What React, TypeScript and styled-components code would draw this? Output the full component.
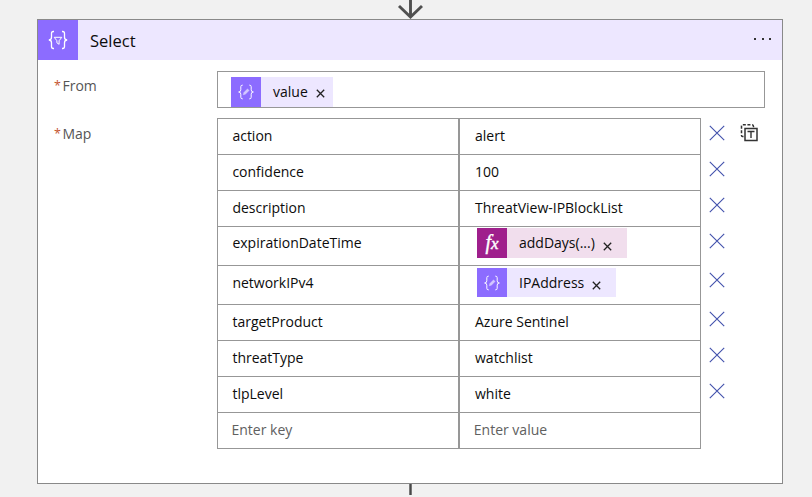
import React from "react";
import styled, { createGlobalStyle } from "styled-components";

const Global = createGlobalStyle`
  * { box-sizing: border-box; }
  html, body { margin: 0; background: #f1f1f1; }
  body { overflow: hidden; font-family: "Open Sans", "Noto Sans", sans-serif; font-size: 14px; color: #0c0c0c; }
`;

const Canvas = styled.main`
  display: flex;
  flex-direction: column;
  width: 812px;
  height: 497px;
  background: #f1f1f1;
`;

const ArrowIn = styled.svg`
  display: block;
  flex: none;
  width: 28px;
  height: 19px;
  margin-left: 396px;
`;

const LineOut = styled.div`
  width: 3px;
  height: 11px;
  margin-left: 409px;
  background: linear-gradient(90deg, #777 0 1px, #484848 1px 2px, #777 2px);
`;

const Card = styled.section`
  flex: none;
  width: 746px;
  height: 465px;
  margin-left: 37px;
  background: #fff;
  border: 1px solid #898989;
`;

const Header = styled.header`
  display: flex;
  align-items: center;
  height: 40px;
  background: #ede7ff;
`;

const HeaderIcon = styled.div`
  display: grid;
  place-items: center;
  width: 40px;
  height: 40px;
  background: #8c6cff;
`;

const Text = styled.span`
  white-space: nowrap;
  line-height: 20px;
`;

const Title = styled(Text)`
  flex: 1;
  padding: 2px 0 0 12px;
  font-size: 16.5px;
`;

const MoreButton = styled.svg`
  width: 20px;
  height: 4px;
  margin: 0 9px 2px 0;
`;

const Field = styled.div<{ $gap: number }>`
  display: flex;
  align-items: flex-start;
  margin-top: ${(p) => p.$gap}px;
`;

const Label = styled.label<{ $top: number }>`
  display: flex;
  width: 179px;
  padding: ${(p) => p.$top}px 0 0 16px;
  color: #555;
`;

const Required = styled.span`
  width: 8.5px;
  font-size: 12.5px;
  line-height: 20px;
  color: #c4532f;
`;

const Input = styled.div`
  display: flex;
  align-items: flex-end;
  width: 548px;
  height: 37px;
  padding-left: 13px;
  border: 1px solid #979797;
`;

const Grid = styled.div`
  width: 484px;
  border-top: 1px solid #979797;
`;

const Row = styled.div<{ $h: number }>`
  display: grid;
  grid-template-columns: 242px 242px;
  height: ${(p) => p.$h}px;
`;

const Cell = styled.div<{ $top: number; $left?: number; $hint?: boolean }>`
  display: flex;
  align-items: flex-start;
  padding: ${(p) => p.$top}px 0 0 ${(p) => p.$left ?? 15}px;
  color: ${(p) => (p.$hint ? "#606060" : "inherit")};
  border: solid #979797;
  border-width: 0 1px 1px 1px;
`;

const Token = styled.div<{ $w: number; $h: number; $bg: string }>`
  display: flex;
  width: ${(p) => p.$w}px;
  height: ${(p) => p.$h}px;
  background: ${(p) => p.$bg};
`;

const ValueToken = styled(Token)`
  margin-left: 2px;
`;

const TokenIcon = styled.div<{ $bg: string }>`
  display: grid;
  place-items: center;
  width: 30px;
  height: 100%;
  margin-right: 12px;
  background: ${(p) => p.$bg};
`;

const TokenLabel = styled(Text)<{ $top: number; $w: number }>`
  width: ${(p) => p.$w}px;
  padding-top: ${(p) => p.$top}px;
`;

const TokenClose = styled.svg<{ $top: number }>`
  width: 9px;
  height: 9px;
  margin-top: ${(p) => p.$top}px;
`;

const RemoveColumn = styled.div`
  display: flex;
  flex-direction: column;
  margin-left: 8px;
`;

const RemoveSlot = styled.div<{ $h: number }>`
  height: ${(p) => p.$h}px;
  padding-top: 7px;
`;

const Remove = styled.svg`
  display: block;
  width: 16px;
  height: 16px;
`;

const TextMode = styled.svg`
  width: 18px;
  height: 18px;
  margin: 6px 0 0 15px;
`;

const Braces = ({ size, filter }: { size: number; filter?: boolean }) => (
  <svg width={size} height={size} viewBox="0 0 20 20" fill="none" stroke="#fff" strokeWidth={filter ? 1.3 : 1.2}>
    <path d="M6 1.5H5.3Q3.5 1.5 3.5 3.4V7.3Q3.5 10 .8 10Q3.5 10 3.5 12.7V16.6Q3.5 18.5 5.3 18.5H6M14 1.5H14.7Q16.5 1.5 16.5 3.4V7.3Q16.5 10 19.2 10Q16.5 10 16.5 12.7V16.6Q16.5 18.5 14.7 18.5H14" />
    {filter ? (
      <path d="M6.2 7.3H13.8L11.1 10.7V14.3L8.9 12.8V10.7Z" strokeWidth="1" />
    ) : (
      <path d="M6.4 13.6L7.2 10.7L11.9 6L14 8.1L9.3 12.8Z" fill="#d3c7ff" stroke="#d3c7ff" strokeWidth=".4" />
    )}
  </svg>
);

const Fx = styled.span`
  font: italic 20px/24px "Liberation Serif", serif;
  color: #fff;
  -webkit-text-stroke: 0.4px #fff;
  padding-bottom: 1px;
  small { font-size: 17px; }
`;

const Close = ({ top }: { top: number }) => (
  <TokenClose $top={top} viewBox="0 0 9 9">
    <path d="M.8.8L8.2 8.2M8.2.8L.8 8.2" stroke="#222" strokeWidth="1.3" />
  </TokenClose>
);

type Entry = { k: string; v: React.ReactNode; h?: number; top?: number; vTop?: number };

const entries: Entry[] = [
  { k: "action", v: <Text>alert</Text> },
  { k: "confidence", v: <Text>100</Text> },
  { k: "description", v: <Text>ThreatView-IPBlockList</Text> },
  {
    k: "expirationDateTime", h: 39, top: 6, vTop: 1,
    v: (
      <ValueToken $w={150} $h={30} $bg="#f1deed">
        <TokenIcon $bg="#9f1f8c"><Fx>f<small>x</small></Fx></TokenIcon>
        <TokenLabel $w={84} $top={5}>addDays(...)</TokenLabel>
        <Close top={14} />
      </ValueToken>
    ),
  },
  {
    k: "networkIPv4", h: 39, vTop: 2,
    v: (
      <ValueToken $w={139} $h={29} $bg="#ede7ff">
        <TokenIcon $bg="#8c6cff"><Braces size={16} /></TokenIcon>
        <TokenLabel $w={73} $top={5}>IPAddress</TokenLabel>
        <Close top={13} />
      </ValueToken>
    ),
  },
  { k: "targetProduct", v: <Text>Azure Sentinel</Text> },
  { k: "threatType", v: <Text>watchlist</Text> },
  { k: "tlpLevel", v: <Text>white</Text> },
];

export default function App() {
  return (
    <Canvas>
      <Global />
      <ArrowIn viewBox="0 0 28 19">
        <path d="M14.5 0V17M3 6L14.5 17L26 6" fill="none" stroke="#505050" strokeWidth="2.9" />
      </ArrowIn>
      <Card>
        <Header>
          <HeaderIcon><Braces size={20} filter /></HeaderIcon>
          <Title>Select</Title>
          <MoreButton viewBox="0 0 20 4">
            <path d="M1 1h2v2h-2zM9 1h2v2h-2zM16 1h2v2h-2z" fill="#333" />
          </MoreButton>
        </Header>
        <Field $gap={11}>
          <Label $top={5}><Required>*</Required><Text>From</Text></Label>
          <Input>
            <Token $w={102} $h={30} $bg="#ede7ff">
              <TokenIcon $bg="#8c6cff"><Braces size={16} /></TokenIcon>
              <TokenLabel $w={43} $top={5}>value</TokenLabel>
              <Close top={12} />
            </Token>
          </Input>
        </Field>
        <Field $gap={10}>
          <Label $top={6}><Required>*</Required><Text>Map</Text></Label>
          <Grid>
            {entries.map((e) => (
              <Row key={e.k} $h={e.h ?? 36}>
                <Cell $top={e.top ?? 7} $left={14.4}><Text>{e.k}</Text></Cell>
                <Cell $top={e.vTop ?? 7}>{e.v}</Cell>
              </Row>
            ))}
            <Row $h={36}>
              <Cell $top={7} $left={13.5} $hint><Text>Enter key</Text></Cell>
              <Cell $top={7} $left={13.8} $hint><Text>Enter value</Text></Cell>
            </Row>
          </Grid>
          <RemoveColumn>
            {entries.map((e) => (
              <RemoveSlot key={e.k} $h={e.h ?? 36}>
                <Remove viewBox="0 0 16 16">
                  <path d="M.8.8L15.2 15.2M15.2.8L.8 15.2" stroke="#4453ad" strokeWidth="1.15" />
                </Remove>
              </RemoveSlot>
            ))}
          </RemoveColumn>
          <TextMode viewBox="0 0 18 18" fill="none" stroke="#333">
            <path d="M3.5 12.5H2.5Q1.5 12.5 1.5 11.5V2Q1.5 .8 2.5 .8H12Q13.5 .8 13.5 2.5V4" strokeWidth="1.5" strokeDasharray="3 1.6" />
            <rect x="5" y="4.5" width="12" height="12" strokeWidth="1.5" />
            <path d="M7.5 7.5H14.5M11 7.5V14" strokeWidth="1.4" />
          </TextMode>
        </Field>
      </Card>
      <LineOut />
    </Canvas>
  );
}
